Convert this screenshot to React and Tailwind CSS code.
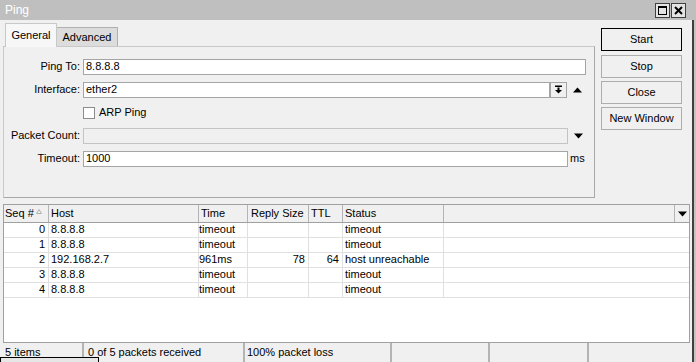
import React from 'react';

const rows = [
  { seq: 0, host: '8.8.8.8', time: 'timeout', size: '', ttl: '', status: 'timeout' },
  { seq: 1, host: '8.8.8.8', time: 'timeout', size: '', ttl: '', status: 'timeout' },
  { seq: 2, host: '192.168.2.7', time: '961ms', size: '78', ttl: '64', status: 'host unreachable' },
  { seq: 3, host: '8.8.8.8', time: 'timeout', size: '', ttl: '', status: 'timeout' },
  { seq: 4, host: '8.8.8.8', time: 'timeout', size: '', ttl: '', status: 'timeout' },
];

function DownTri() {
  return (
    <svg width="9" height="6" viewBox="0 0 9 6">
      <path d="M0 0.5 H9 L4.5 5.5 Z" fill="#000" />
    </svg>
  );
}

function UpTri() {
  return (
    <svg width="9" height="6" viewBox="0 0 9 6">
      <path d="M0 5.5 H9 L4.5 0.5 Z" fill="#000" />
    </svg>
  );
}

function FieldRow({ label, children }) {
  return (
    <div className="flex items-center h-[17px]">
      <div className="w-[76px] text-right whitespace-nowrap">{label}</div>
      <div className="ml-[3px] flex items-center">{children}</div>
    </div>
  );
}

function Btn({ children, primary }) {
  return (
    <div
      className={`w-[81px] h-[23px] flex items-center justify-center bg-[#f0f0f0] border ${
        primary ? 'border-black' : 'border-[#adadad]'
      }`}
    >
      {children}
    </div>
  );
}

function App() {
  return (
    <div className="relative w-[696px] h-[362px] overflow-hidden bg-[#f0f0f0] text-[11px] leading-[13px] text-black font-['Liberation_Sans',Arial,sans-serif]">
      {/* title bar */}
      <div className="h-[20px] bg-[#bfbfbf] flex items-center pl-[5px] pr-[10px]">
        <span className="text-white text-[12px]">Ping</span>
        <div className="ml-auto flex gap-[1px]">
          <div className="w-[15px] h-[15px] border border-[#404040] bg-[#e4e4e4] flex items-center justify-center">
            <svg width="9" height="9" viewBox="0 0 9 9">
              <rect x="0.5" y="0.5" width="8" height="8" fill="none" stroke="#000" />
              <rect x="0" y="0" width="9" height="2" fill="#000" />
            </svg>
          </div>
          <div className="w-[15px] h-[15px] border border-[#404040] bg-[#e4e4e4] flex items-center justify-center">
            <svg width="9" height="9" viewBox="0 0 9 9">
              <path d="M1 1 L8 8 M8 1 L1 8" stroke="#000" strokeWidth="2" />
            </svg>
          </div>
        </div>
      </div>

      <div className="flex h-[342px]">
        <div className="w-[692px] flex flex-col pl-[3px]">
          {/* top section */}
          <div className="flex h-[184px]">
            <div className="w-[592px] pt-[3px] flex flex-col">
              <div className="flex h-[23px] pl-[2px] items-start">
                <div className="relative z-10 w-[52px] h-[24px] bg-[#f7f7f7] border-t border-l border-r border-[#c8c8c8] flex items-center justify-center">
                  General
                </div>
                <div className="mt-[4px] w-[61px] h-[19px] bg-[#dcdcdc] border-t border-r border-[#b0b0b0] flex items-center justify-center">
                  Advanced
                </div>
              </div>
              <div className="h-[152px] border border-[#c8c8c8] border-r-[#a8a8a8] border-b-[#a8a8a8] pt-[11px] flex flex-col gap-[6px]">
                <FieldRow label="Ping To:">
                  <div className="w-[503px] h-[16px] bg-white border border-[#a5a5a5] pl-[2px] flex items-center">8.8.8.8</div>
                </FieldRow>
                <FieldRow label="Interface:">
                  <div className="w-[467px] h-[16px] bg-white border border-[#a5a5a5] pl-[2px] flex items-center">ether2</div>
                  <div className="w-[17px] h-[16px] border border-[#a5a5a5] bg-[#f0f0f0] flex items-center justify-center">
                    <svg width="9" height="9" viewBox="0 0 9 9">
                      <rect x="1" y="0.5" width="7" height="1.5" fill="#000" />
                      <rect x="3.5" y="2.5" width="2" height="2.5" fill="#000" />
                      <path d="M1 5 H8 L4.5 8.5 Z" fill="#000" />
                    </svg>
                  </div>
                  <div className="ml-[6px] flex items-center">
                    <UpTri />
                  </div>
                </FieldRow>
                <div className="flex items-center h-[17px] pl-[79px]">
                  <div className="w-[12px] h-[12px] bg-white border border-[#8c8c8c]" />
                  <span className="ml-[4px]">ARP Ping</span>
                </div>
                <FieldRow label="Packet Count:">
                  <div className="w-[485px] h-[16px] bg-[#f0f0f0] border border-[#c4c4c4]" />
                  <div className="ml-[6px] flex items-center">
                    <DownTri />
                  </div>
                </FieldRow>
                <FieldRow label="Timeout:">
                  <div className="w-[485px] h-[16px] bg-white border border-[#a5a5a5] pl-[2px] flex items-center">1000</div>
                  <span className="ml-[2px]">ms</span>
                </FieldRow>
              </div>
            </div>
            <div className="ml-[6px] pt-[8px] flex flex-col gap-[3px]">
              <div className="mb-[1px]">
                <Btn primary>Start</Btn>
              </div>
              <Btn>Stop</Btn>
              <Btn>Close</Btn>
              <Btn>New Window</Btn>
            </div>
          </div>

          {/* table */}
          <div className="w-[687px] flex-1 flex flex-col border-l border-r border-t border-[#a0a0a0] bg-white">
            <div className="flex h-[18px] bg-[#f0f0f0] border-b border-[#a0a0a0]">
              <div className="w-[45px] border-r border-[#b4b4b4] pl-[1px] flex items-center">
                Seq #
                <svg className="ml-[2px] mb-[5px]" width="6" height="5" viewBox="0 0 6 5">
                  <path d="M0.5 4.5 H5.5 L3 0.5 Z" fill="none" stroke="#b0b0b0" />
                </svg>
              </div>
              <div className="w-[150px] border-r border-[#b4b4b4] pl-[2px] flex items-center">Host</div>
              <div className="w-[49px] border-r border-[#b4b4b4] pl-[2px] flex items-center">Time</div>
              <div className="w-[61px] border-r border-[#b4b4b4] pl-[3px] flex items-center">Reply Size</div>
              <div className="w-[34px] border-r border-[#b4b4b4] pl-[2px] flex items-center">TTL</div>
              <div className="w-[101px] border-r border-[#b4b4b4] pl-[2px] flex items-center">Status</div>
              <div className="w-[231px] border-r border-[#b4b4b4]" />
              <div className="flex-1 flex items-center justify-center">
                <DownTri />
              </div>
            </div>
            {rows.map((r) => (
              <div key={r.seq} className="flex h-[15px] border-b border-[#e0e0e0]">
                <div className="w-[45px] border-r border-[#e0e0e0] pr-[3px] text-right">{r.seq}</div>
                <div className="w-[150px] border-r border-[#e0e0e0] pl-[2px]">{r.host}</div>
                <div className="w-[49px] border-r border-[#e0e0e0]">{r.time}</div>
                <div className="w-[61px] border-r border-[#e0e0e0] pr-[3px] text-right">{r.size}</div>
                <div className="w-[34px] border-r border-[#e0e0e0] pr-[3px] text-right">{r.ttl}</div>
                <div className="w-[101px] border-r border-[#e0e0e0] pl-[2px] whitespace-nowrap">{r.status}</div>
                <div className="flex-1" />
              </div>
            ))}
          </div>

          {/* status bar */}
          <div className="w-[687px] h-[20px] flex border-t border-[#a0a0a0] pt-[3px]">
            <div className="w-[79px] pl-[2px]">5 items</div>
            <div className="w-[2px] -mt-[3px] bg-[#b4b4b4]" />
            <div className="w-[159px] pl-[4px]">0 of 5 packets received</div>
            <div className="w-[2px] -mt-[3px] bg-[#b4b4b4]" />
            <div className="w-[145px] pl-[2px]">100% packet loss</div>
            <div className="w-[2px] -mt-[3px] bg-[#b4b4b4]" />
            <div className="w-[96px]" />
            <div className="w-[2px] -mt-[3px] bg-[#b4b4b4]" />
            <div className="w-[97px]" />
            <div className="w-[2px] -mt-[3px] bg-[#b4b4b4]" />
            <div className="flex-1" />
          </div>
        </div>
        <div className="w-[2px] bg-[#404040]" />
        <div className="w-[2px] bg-[#c4c4c4]" />
      </div>

      {/* overlapping box at bottom-left */}
      <div className="absolute left-0 top-[357px] w-[99px] h-[10px] border border-black bg-[#e6e6e6]" />
    </div>
  );
}

export default App;
